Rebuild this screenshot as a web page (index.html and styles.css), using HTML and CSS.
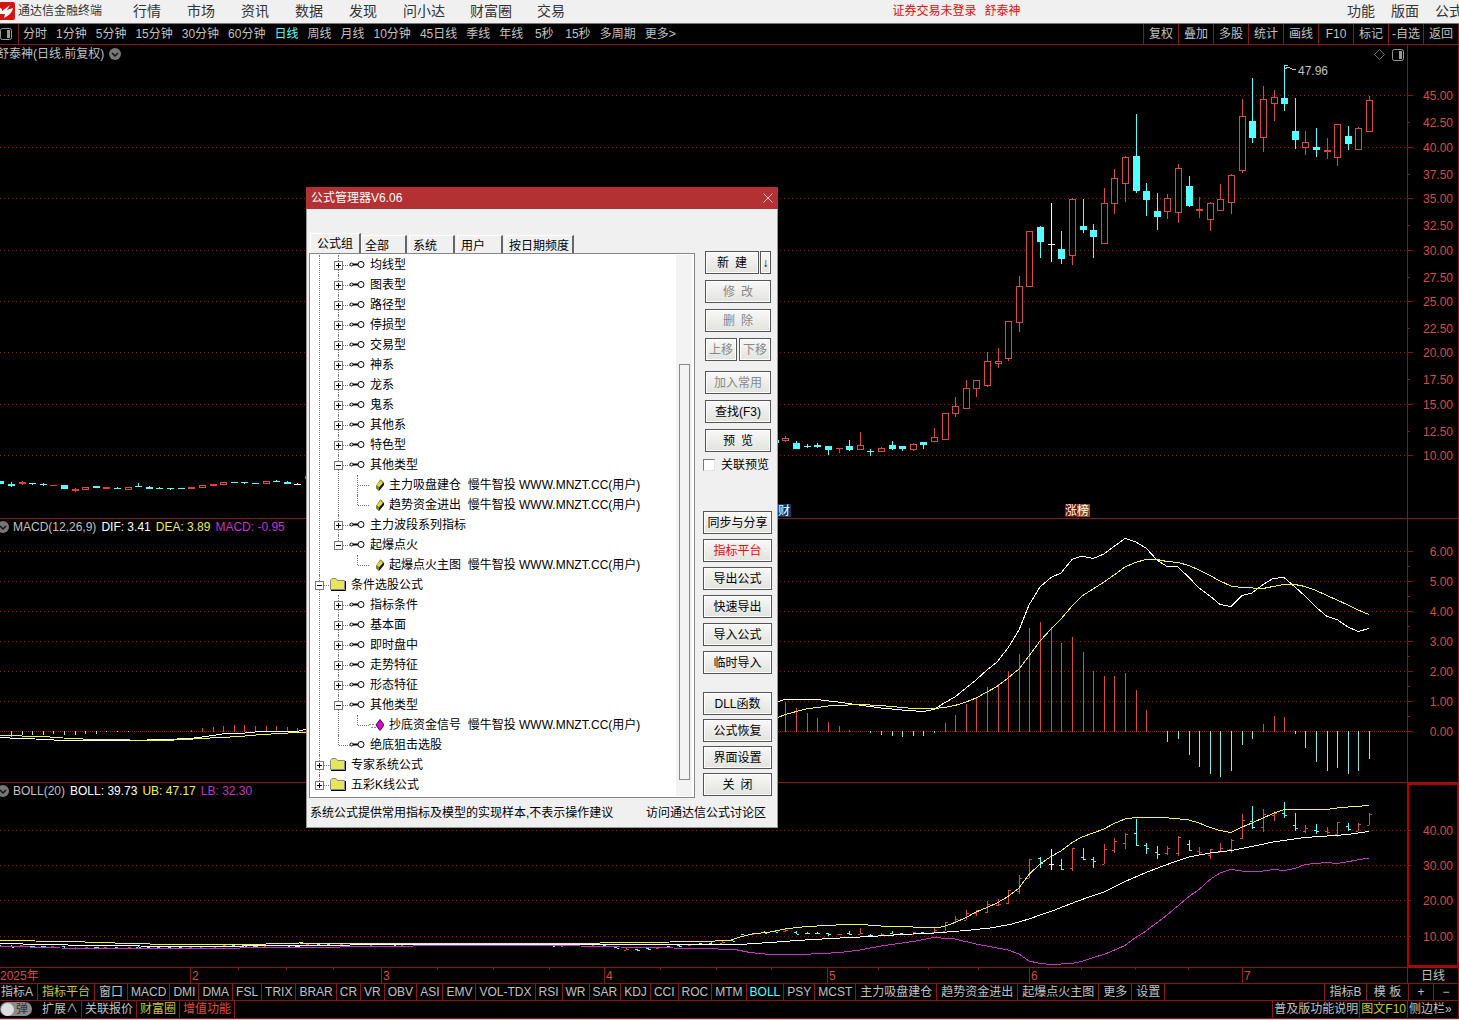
FILE: index.html
```html
<!DOCTYPE html>
<html lang="zh-CN">
<head>
    <meta charset="UTF-8">
    <title>通达信金融终端</title>
    <link rel="stylesheet" href="styles.css">
</head>
<body>

<div class="terminal">

    <header class="menubar">
        <svg class="logo" viewBox="0 0 16 18" width="16" height="18">
            <rect width="16" height="18" rx="2" fill="#d9120f"/>
            <path d="M0 6 L1 6 Q3 6 3 9 L11 3 L8 8 L14 6 Q13 12 5 16 L6 12 L0 12 Z" fill="#fff"/>
        </svg>
        <span class="app_name">通达信金融终端</span>
        <nav class="menu">
            <a href="#">行情</a><a href="#">市场</a><a href="#">资讯</a><a href="#">数据</a><a href="#">发现</a><a href="#">问小达</a><a href="#">财富圈</a><a href="#">交易</a>
        </nav>
        <div class="login_state"><span>证券交易未登录</span><span>舒泰神</span></div>
        <nav class="menu_right">
            <a href="#">功能</a><a href="#">版面</a><a href="#">公式</a>
        </nav>
    </header>

    <div class="periods">
        <svg class="side_icon" viewBox="0 0 12 12" width="12" height="12"><rect x="0.5" y="0.5" width="11" height="11" rx="2" fill="none" stroke="#999"/><rect x="7" y="2" width="3" height="8" fill="#999"/></svg>
        <nav class="period_list">
            <a href="#">分时</a><a href="#">1分钟</a><a href="#">5分钟</a><a href="#">15分钟</a><a href="#">30分钟</a><a href="#">60分钟</a><a href="#" class="on">日线</a><a href="#">周线</a><a href="#">月线</a><a href="#">10分钟</a><a href="#">45日线</a><a href="#">季线</a><a href="#">年线</a><a href="#">5秒</a><a href="#">15秒</a><a href="#">多周期</a><a href="#">更多&gt;</a>
        </nav>
        <div class="tools">
            <button>复权</button><button>叠加</button><button>多股</button><button>统计</button><button>画线</button><button>F10</button><button>标记</button><button>-自选</button><button>返回</button>
        </div>
    </div>

    <main class="charts">
        <section class="panel">
            <svg id="price" viewBox="0 45 1407 473"></svg>
            <svg id="price_axis" viewBox="1407 45 52 473"></svg>
            <div class="panel_head stock_head">
                <span>舒泰神(日线.前复权)</span>
                <svg class="fold" viewBox="0 0 12 12" width="12" height="12"><circle cx="6" cy="6" r="6" fill="#777"/><path d="M3 5 L6 8 L9 5" fill="none" stroke="#111" stroke-width="1.5"/></svg>
            </div>
            <div class="corner">
                <svg viewBox="0 0 11 11" width="11" height="11"><path d="M5.5 0.5 L10.5 5.5 L5.5 10.5 L0.5 5.5 Z" fill="none" stroke="#777"/></svg>
                <svg viewBox="0 0 12 12" width="12" height="12"><rect x="0.5" y="0.5" width="11" height="11" rx="2" fill="none" stroke="#999"/><rect x="7" y="2" width="3" height="8" fill="#999"/></svg>
            </div>
        </section>

        <section class="panel">
            <svg id="macd" viewBox="0 519 1407 263"></svg>
            <svg id="macd_axis" viewBox="1407 519 52 263"></svg>
            <div class="panel_head">
                <svg class="fold" viewBox="0 0 12 12" width="12" height="12"><circle cx="6" cy="6" r="6" fill="#777"/><path d="M3 5 L6 8 L9 5" fill="none" stroke="#111" stroke-width="1.5"/></svg>
                <span>MACD(12,26,9)</span><span class="white">DIF: 3.41</span><span class="yellow">DEA: 3.89</span><span class="magenta">MACD: -0.95</span>
            </div>
        </section>

        <section class="panel">
            <svg id="boll" viewBox="0 783 1407 184"></svg>
            <svg id="boll_axis" viewBox="1407 783 52 184"></svg>
            <div class="panel_head">
                <svg class="fold" viewBox="0 0 12 12" width="12" height="12"><circle cx="6" cy="6" r="6" fill="#777"/><path d="M3 5 L6 8 L9 5" fill="none" stroke="#111" stroke-width="1.5"/></svg>
                <span>BOLL(20)</span><span class="white">BOLL: 39.73</span><span class="yellow">UB: 47.17</span><span class="magenta">LB: 32.30</span>
            </div>
        </section>

        <section class="panel timeline">
            <svg id="timeline" viewBox="0 968 1407 15"></svg>
            <div class="cycle">日线</div>
        </section>
    </main>

    <div class="tabbar">
        <button class="cn">指标A</button><button class="cn yellow">指标平台</button><button class="cn">窗口</button><button>MACD</button><button>DMI</button><button>DMA</button><button>FSL</button><button>TRIX</button><button>BRAR</button><button>CR</button><button>VR</button><button>OBV</button><button>ASI</button><button>EMV</button><button>VOL-TDX</button><button>RSI</button><button>WR</button><button>SAR</button><button>KDJ</button><button>CCI</button><button>ROC</button><button>MTM</button><button class="on">BOLL</button><button>PSY</button><button>MCST</button><button class="cn">主力吸盘建仓</button><button class="cn">趋势资金进出</button><button class="cn">起爆点火主图</button><button class="cn">更多</button><button class="cn">设置</button>
        <div class="tab_right">
            <button class="tpl">指标B</button><button class="tpl">模 板</button><button class="zoom">+</button><button class="zoom">−</button>
        </div>
    </div>

    <footer class="statusbar">
        <label class="switch"><input type="checkbox"><span class="knob"></span><span class="switch_text">弹</span></label>
        <button>扩展∧</button><button>关联报价</button><button class="yellow">财富圈</button><button class="red">增值功能</button>
        <div class="status_right">
            <a href="#">普及版功能说明</a><a href="#" class="yellow">图文F10</a><a href="#">侧边栏»</a>
        </div>
    </footer>

    <!-- 公式管理器 -->
    <div class="dialog" role="dialog" aria-label="公式管理器">
        <div class="dialog_title">
            <span>公式管理器V6.06</span>
            <button class="close" aria-label="关闭"><svg viewBox="0 0 10 10" width="10" height="10"><path d="M0.5 0.5 L9.5 9.5 M9.5 0.5 L0.5 9.5" stroke="#f3c9c9" fill="none"/></svg></button>
        </div>
        <div class="dialog_body">
            <div class="left">
                <div class="tabs">
                    <button class="sel">公式组</button><button>全部</button><button>系统</button><button>用户</button><button>按日期频度</button>
                </div>
                <div class="tree_box">
                    <ul class="tree" id="tree"></ul>
                    <div class="track"><div class="thumb"></div></div>
                </div>
            </div>
            <div class="side">
                <div class="group narrow">
                    <div class="pair"><button class="grow">新&ensp;建</button><button class="arrow">↓</button></div>
                    <button disabled>修&ensp;改</button>
                    <button disabled>删&ensp;除</button>
                    <div class="pair even"><button disabled>上移</button><button disabled>下移</button></div>
                </div>
                <div class="group narrow">
                    <button class="dim">加入常用</button>
                    <button>查找(F3)</button>
                    <button>预&ensp;览</button>
                </div>
                <label class="link_preview"><input type="checkbox">关联预览</label>
                <div class="group io">
                    <button>同步与分享</button>
                    <button class="hot">指标平台</button>
                    <button>导出公式</button>
                    <button>快速导出</button>
                    <button>导入公式</button>
                    <button>临时导入</button>
                </div>
                <div class="group last">
                    <button>DLL函数</button>
                    <button>公式恢复</button>
                    <button>界面设置</button>
                    <button>关&ensp;闭</button>
                </div>
            </div>
        </div>
        <div class="dialog_foot">
            <span>系统公式提供常用指标及模型的实现样本,不表示操作建议</span>
            <a href="#">访问通达信公式讨论区</a>
        </div>
    </div>

</div>

<script src="charts.js"></script>
</body>
</html>
```
FILE: styles.css
```css
*{
    margin: 0;
    padding: 0;
    box-sizing: border-box;
}
body{
    background: #000;
    color: #c0c0c0;
    font: 12px/16px "Liberation Sans", "Noto Sans CJK SC", sans-serif;
    overflow-x: hidden;
}
a{
    color: inherit;
    text-decoration: none;
}
button{
    font: inherit;
    color: inherit;
    background: none;
    border: none;
    white-space: nowrap;
}
svg{
    display: block;
}
.terminal{
    position: relative;
    border-bottom: 1px solid #d8c8c8;
    overflow: hidden;
}
.yellow{ color: #c8c832; }
.white{ color: #fff; }
.magenta{ color: #c832c8; }
.red{ color: #e04a40; }

/* 顶部菜单 */
.menubar{
    display: flex;
    align-items: center;
    height: 24px;
    padding-bottom: 2px;
    background: #f0f0f0;
    border-bottom: 1px solid #777;
    color: #333;
    white-space: nowrap;
}
.logo{
    margin-left: -1px;
}
.app_name{
    width: 118px;
    padding-left: 3px;
}
.menu{
    display: flex;
    gap: 25px;
    font-size: 14px;
}
.menu a{
    min-width: 29px;
}
.login_state{
    display: flex;
    gap: 8px;
    margin: 0 auto;
    color: #e01010;
}
.menu_right{
    display: flex;
    gap: 16px;
    margin-right: -4px;
    font-size: 14px;
}

/* 周期栏 */
.periods{
    display: flex;
    align-items: center;
    height: 21px;
    border-bottom: 1px solid #8c1616;
    white-space: nowrap;
}
.side_icon{
    flex: none;
}
.period_list{
    display: flex;
    gap: 9px;
    margin-left: 6px;
    padding-left: 4px;
    border-left: 1px solid #8c1616;
    line-height: 20px;
}
.period_list a{
    min-width: 24px;
    text-align: center;
}
.on{
    color: #54ffff;
}
.tools{
    display: flex;
    margin-left: auto;
    border-right: 1px solid #8c1616;
}
.tools button{
    width: 35px;
    height: 20px;
    border-left: 1px solid #8c1616;
}

/* 图表 */
.panel{
    position: relative;
    display: grid;
    grid-template-columns: 1fr 52px;
    border-bottom: 1px solid #8c1616;
}
.panel > svg{
    width: 100%;
    overflow: hidden;
    shape-rendering: crispEdges;
}
.panel text{
    font: 12px "Liberation Sans", "Noto Sans CJK SC", sans-serif;
}
.panel_head{
    position: absolute;
    top: 0;
    left: 0;
    display: flex;
    align-items: center;
    gap: 5px;
    margin-left: -3px;
}
.panel_head .fold + span{
    margin-left: -1px;
}
.panel_head .yellow{ color: #f0f04a; }
.stock_head{
    top: 1px;
}
.corner{
    position: absolute;
    top: 4px;
    right: 55px;
    display: flex;
    gap: 7px;
}
.timeline{
    height: 16px;
}
.cycle{
    border: solid #8c1616;
    border-width: 0 1px;
    text-align: center;
}

/* 指标标签 */
.tabbar, .statusbar{
    display: flex;
    height: 17px;
    border-bottom: 1px solid #8c1616;
}
.tabbar button{
    padding: 0 3px;
    line-height: 16px;
    border-right: 1px solid #8c1616;
}
.tabbar .cn{
    padding: 0 4px;
}
.tabbar .cn:first-child{
    padding-left: 1px;
}
.tab_right, .status_right{
    display: flex;
    margin-left: auto;
    border-left: 1px solid #8c1616;
}
.tabbar .tpl{
    width: 42px;
    padding: 0;
}
.tabbar .zoom{
    width: 25px;
}
.statusbar{
    height: 18px;
}
.statusbar button, .status_right a{
    padding: 0 3px;
    line-height: 17px;
    border-right: 1px solid #8c1616;
}
.status_right a{
    padding: 0 1px;
}
.status_right a:last-child{
    width: 51px;
}
.switch{
    position: relative;
    display: flex;
    align-items: center;
    justify-content: flex-end;
    width: 32px;
    height: 14px;
    margin: 1px 7px 0 0;
    padding-right: 4px;
    border-radius: 7px;
    background: #8c8c8c;
    color: #333;
}
.switch input{
    position: absolute;
    opacity: 0;
}
.knob{
    position: absolute;
    left: 1px;
    width: 13px;
    height: 13px;
    border-radius: 50%;
    background: #ddd;
}

/* 公式管理器 */
.dialog{
    position: absolute;
    left: 306px;
    top: 187px;
    width: 472px;
    background: #f0f0f0;
    border: 1px solid #999;
    border-top: none;
    color: #000;
}
.dialog_title{
    display: flex;
    align-items: center;
    justify-content: space-between;
    height: 22px;
    margin: 0 -1px;
    padding: 0 5px;
    background: #b43032;
    color: #fff;
}
.close{
    width: 10px;
    height: 12px;
}
.dialog_body{
    display: flex;
    justify-content: space-between;
    padding: 24px 5px 0 2px;
}
.left{
    width: 386px;
}
.tabs{
    display: flex;
    align-items: flex-end;
    gap: 2px;
    height: 20px;
    padding-left: 1px;
}
.tabs button{
    min-width: 46px;
    height: 18px;
    padding: 2px 3px 0;
    text-align: left;
    border: solid #666;
    border-width: 0 2px 0 0;
    border-top: 1px solid #fff;
    border-left: 1px solid #fff;
}
.tabs .sel{
    height: 20px;
    padding: 0 6px;
    margin-right: -2px;
}
.tree_box{
    display: flex;
    justify-content: space-between;
    height: 545px;
    padding: 1px 2px 1px 0;
    background: #fff;
    border: 1px solid #888;
}
.track{
    width: 16px;
    background: #f3f3f3;
    padding: 109px 2px 0 3px;
}
.thumb{
    height: 416px;
    border: 1px solid #888;
    background: #f3f3f3;
}
.tree, .tree ul{
    list-style: none;
}
.tree{
    overflow: hidden;
    flex: 1;
}
.tree li{
    position: relative;
    padding-left: 19px;
}
/* 竖向虚线 */
.tree li::before{
    content: "";
    position: absolute;
    left: 9px;
    top: 0;
    bottom: 0;
    border-left: 1px dotted #777;
}
.tree li:last-child::before{
    bottom: auto;
    height: 10px;
}
.row{
    display: flex;
    align-items: center;
    gap: 5px;
    height: 20px;
    padding-left: 1px;
    white-space: pre;
}
/* 横向虚线 */
.row::before{
    content: "";
    position: absolute;
    left: 10px;
    top: 10px;
    width: 11px;
    border-top: 1px dotted #777;
}
.row svg{
    flex: none;
}
.toggle{
    position: absolute;
    left: 5px;
    top: 6px;
    width: 9px;
    height: 9px;
    border: 1px solid #777;
    background: #fff;
}
.toggle::before, .toggle.plus::after{
    content: "";
    position: absolute;
    left: 1px;
    top: 3px;
    width: 5px;
    height: 1px;
    background: #000;
}
.toggle.plus::after{
    left: 3px;
    top: 1px;
    width: 1px;
    height: 5px;
}

/* 右侧按钮 */
.side{
    width: 69px;
    padding-top: 18px;
}
.group{
    display: flex;
    flex-direction: column;
    gap: 6px;
}
.narrow{
    padding: 0 1px 0 2px;
    margin-bottom: 10px;
}
.group button{
    height: 23px;
    border: 1px solid #555;
    background: linear-gradient(#f8f8f8, #e2e2de);
    box-shadow: inset 0 0 0 1px #fff;
}
.group button:disabled, .group .dim{
    color: #888;
}
.group .hot{
    color: #f00;
}
.pair{
    display: flex;
    gap: 1px;
}
.pair .grow, .even button{
    flex: 1;
}
.pair .arrow{
    display: flex;
    align-items: center;
    justify-content: center;
    width: 11px;
}
.even{
    gap: 2px;
}
.link_preview{
    display: flex;
    align-items: center;
    gap: 6px;
    height: 16px;
    margin-top: -5px;
    white-space: nowrap;
}
.link_preview input{
    appearance: none;
    width: 12px;
    height: 12px;
    background: #fff;
    border: 1px solid #e3e3e3;
    border-top-color: #777;
    border-left-color: #777;
}
.io{
    gap: 5px;
    margin-top: 38px;
}
.last{
    gap: 4px;
    margin-top: 18px;
}
.dialog_foot{
    display: flex;
    justify-content: space-between;
    padding: 7px 11px 6px 3px;
}
```
FILE: charts.js
```js
var RED = "#d84a45", CYAN = "#54ffff", GRID = "#8c1616", LINE = "#8c1616";
var NS = "http://www.w3.org/2000/svg";

function el (id, name, attrs, text) {
    var node = document.createElementNS(NS, name);
    for (var key in attrs) {
        node.setAttribute(key, attrs[key]);
    }
    if (text) node.textContent = text;
    document.getElementById(id).appendChild(node);
}
function rect (id, x, y, w, h, color) {
    el(id, "rect", {x: x, y: y, width: w, height: Math.max(h, 1), fill: color});
}
function grid (id, y, dash) {
    el(id, "line", {x1: 0, x2: 1407, y1: y + 0.5, y2: y + 0.5, stroke: GRID, "stroke-dasharray": dash});
}
function curve (id, points, color) {
    el(id, "polyline", {points: points, fill: "none", stroke: color, "stroke-width": 1});
}
function label (id, x, y, text, color) {
    el(id, "text", {x: x, y: y, fill: color}, text);
}
function scale (id, y, text, tick) {
    rect(id, 1408, y, tick, 1, LINE);
    el(id, "text", {x: 1453, y: y + 5, fill: RED, "text-anchor": "end"}, text);
}
// k = 0 is the newest bar
function barX (k) {
    return Math.round(1369 - 10.61 * k);
}

// kind, high, body top, body bottom, low
var bars = [
    ["u",96,100,132,132],["u",127,128,150,150],["d",126,136,144,150],["u",124,124,158,166],["r",138,150,152,159],
    ["d",128,147,150,157],["u",131,142,148,155],["d",98,131,140,149],["d",65,98,104,111],["u",90,97,104,121],
    ["u",86,99,138,152],["d",78,121,138,143],["u",99,116,171,173],["u",174,175,203,214],["u",184,199,211,211],
    ["u",202,203,220,231],["r",197,209,211,218],["d",176,186,206,207],["u",164,168,213,223],["u",194,198,212,219],
    ["d",193,211,217,230],["d",183,191,200,216],["d",114,156,191,193],["u",156,157,184,202],["u",169,178,204,214],
    ["u",188,203,244,244],["d",224,230,237,258],["d",199,226,230,233],["u",198,199,256,265],["d",231,249,259,264],
    ["w",203,244,245,262],["d",226,227,242,258],["u",231,231,287,287],["u",276,286,323,332],["u",321,321,359,361],
    ["u",348,361,364,368],["u",352,361,386,387],["u",380,380,389,397],["u",380,388,409,409],["u",397,406,414,417],
    ["u",413,413,440,440],["u",428,437,442,442],["d",442,442,445,449],["u",443,444,450,451],["d",446,446,449,451],
    ["d",441,445,449,450],["u",447,448,452,452],["d",449,451,452,456],["u",432,445,450,450],["d",440,446,450,451],
    ["r",448,448,449,453],["d",446,446,450,455],["d",443,445,447,448],["d",444,446,447,448],["d",441,443,449,449],
    ["u",436,438,441,442]
];
// quiet stretch before the rally
var flat = [440,442,446,449,466,472,474,476,479,482,485,488,491,494,492,486,480,478,476,479,481,480,478,476,477,478,476,475,476,478,479,477,476,475,476,477,478,476,477,476,475,477,478,477,476];
for (var i = 0; i < flat.length; i++) {
    bars.push([i % 3 == 2 ? "u" : "d", flat[i] - 1, flat[i], flat[i] + 3, flat[i] + 4]);
}
bars.push(["w",483,484,485,485],["d",481,482,484,484],["d",480,481,482,482],["u",481,481,484,484],["d",483,483,484,484],
    ["d",482,482,483,484],["d",482,482,483,483],["u",482,482,485,485],["r",484,484,486,486],["u",485,485,488,488],
    ["r",487,487,489,489],["d",488,488,489,489],["d",488,488,489,490],["d",487,488,489,489],["d",486,487,489,489],
    ["d",483,486,487,487],["u",487,487,490,490],["d",487,488,489,489],["r",487,487,489,489],["d",486,486,488,488],
    ["u",487,487,490,490],["r",488,489,491,492],["d",485,485,489,489],["r",485,485,486,486],["d",483,484,485,486],
    ["d",483,483,484,485],["r",481,482,484,485],["d",482,484,486,487],["d",481,481,484,484]);

var colors = {u: RED, r: "#e83a36", d: CYAN, w: "#fff"};

// axis frames, the last one is the active panel
rect("price_axis", 1407, 45, 1, 473, LINE);
rect("price_axis", 1458, 45, 1, 473, LINE);
rect("macd_axis", 1407, 519, 1, 263, LINE);
rect("macd_axis", 1458, 519, 1, 263, LINE);
el("boll_axis", "rect", {x: 1408, y: 784, width: 50, height: 182, fill: "none", stroke: "#b40000", "stroke-width": 2});

// price panel
[95, 147, 198, 250, 301, 352, 404, 455].forEach(function (y, n) {
    grid("price", y, "1 3");
    scale("price_axis", y, (45 - n * 5).toFixed(2), 5);
});
[122, 174, 225, 277, 328, 379, 431].forEach(function (y, n) {
    scale("price_axis", y, (42.5 - n * 5).toFixed(2), 2);
});
bars.forEach(function (b, k) {
    var x = barX(k), c = colors[b[0]];
    if (b[0] == "u") {
        if (b[2] > b[1]) rect("price", x, b[1], 1, b[2] - b[1], c);
        if (b[4] > b[3]) rect("price", x, b[3], 1, b[4] - b[3], c);
        el("price", "rect", {x: x - 2.5, y: b[2] + 0.5, width: 6, height: Math.max(b[3] - b[2] - 1, 1), fill: "#000", stroke: c});
    } else {
        rect("price", x, b[1], 1, b[4] - b[1], c);
        rect("price", x - 3, b[2], 7, b[3] - b[2], c);
    }
});
el("price", "path", {d: "M1284.5 65.5 h3 M1285 68.5 h2 M1286 67 l4 1 l2 1 l4 1", fill: "none", stroke: "#c0c0c0"});
label("price", 1298, 75, "47.96", "#c0c0c0");
rect("price", 778, 504, 13, 13, "#0c3c6e");
label("price", 778, 515, "财", "#fff");
rect("price", 1065, 504, 12, 13, "#780808");
rect("price", 1077, 504, 13, 13, "#8a4e10");
label("price", 1065, 515, "涨榜", "#fff");

// MACD panel
for (var n = 0; n < 7; n++) {
    grid("macd", 551 + n * 30, n == 6 ? "1 1" : "1 3");
    scale("macd_axis", 551 + n * 30, (6 - n).toFixed(2), 5);
    if (n < 6) rect("macd_axis", 1408, 566 + n * 30, 2, 1, LINE);
}
var hist = [759,771,774,768,771,762,748,734,717,716,724,739,745,771,777,774,767,755,739,742,731,710,690,673,676,676,671,652,637,643,627,622,628,654,671,684,687,697,704,715,723,733,736,736,737,736,735,733,731,730,726,722,718,713,708,702];
hist.forEach(function (y, k) {
    if (y < 731) rect("macd", barX(k), y, 1, 732 - y, RED);
    if (y > 731) rect("macd", barX(k), 731, 1, y - 731, "#86e8e8");
});
[728,727,726,726,726,725,725,726,727,728,730,731,731,731,731,731,732,732,732,734,734,735,735,734,735,735,735,737].forEach(function (y, n) {
    if (y < 731) rect("macd", barX(101 + n), y, 1, 732 - y, RED);
    if (y > 731) rect("macd", barX(101 + n), 731, 1, y - 731, "#86e8e8");
});
curve("macd", "0,737.5 10,738 48,739.5 60,740.5 130,740.5 165,739.5 190,738.5 206,736.5 222,734 232,733 245,733 260,731.5 297,731.5 303,730 310,728 778,702 785,699 812,699 838,702 859,705 881,708 902,710 923,711.5 934,709.5 944,703 955,697 966,688 976,680 987,670 997,662 1008,648 1019,630 1029,605 1040,587 1051,577.5 1061,573 1072,559.5 1082,556 1093,558.5 1104,554 1114,546.5 1125,538.5 1135,541.5 1146,548 1157,560 1167,566.5 1178,567 1189,577.5 1199,588 1210,596 1220,604.5 1231,606.5 1242,595.5 1252,593 1263,584.5 1273,578.5 1284,577.5 1295,587 1305,596 1316,607 1327,616.5 1337,619.5 1348,627 1358,631.5 1369,628.5", "#fff");
curve("macd", "0,735 12,735 27,736.5 50,737 70,738.5 95,739.5 130,740 163,740.5 185,739.5 210,738 240,736.5 262,734.5 306,732 778,717.5 785,714.5 806,709 828,706 859,704.5 881,705.5 913,708.5 934,708.5 944,707.5 955,705.5 966,702 976,698 987,692 997,686.5 1008,678 1019,669 1029,656 1040,641 1051,629 1061,619 1072,606 1082,596 1093,589 1104,582 1114,575 1125,567 1135,562.5 1146,559.5 1157,559.5 1167,561.5 1178,562.5 1189,565.5 1199,570 1210,575.5 1220,581 1231,586 1242,587.5 1263,588.5 1273,586.5 1284,584.5 1295,584.5 1305,586.5 1316,590.5 1327,595.5 1337,600 1348,605 1358,610 1369,614.5", "#f0f04a");

// BOLL panel, same bars on its own scale
[830, 865, 900, 936].forEach(function (y, n) {
    grid("boll", y, "1 3");
    scale("boll_axis", y, (40 - n * 10).toFixed(2), 3);
});
function bollY (y) {
    var price = 45 - (y - 95) * 35 / 360;
    return Math.round(936 - (price - 10) * 106 / 30);
}
bars.forEach(function (b, k) {
    var x = barX(k), c = colors[b[0]], up = b[0] == "u";
    var high = bollY(b[1]), low = bollY(b[4]);
    rect("boll", x, high, 1, low - high, c);
    rect("boll", x - 2, bollY(up ? b[3] : b[2]), 2, 1, c);
    rect("boll", x + 1, bollY(up ? b[2] : b[3]), 2, 1, c);
});
curve("boll", "0,940.5 70,941.5 130,943.5 190,945 250,944.5 300,943 400,943.5 500,943.5 600,943 640,942.5 700,941.5 730,940.5 740,937 752,934 770,932 785,929 806,926.5 828,925.5 845,924.5 862,924.5 881,926 913,927 934,928 944,926.5 955,922.5 966,917.5 976,912 987,907.5 997,903 1008,896.5 1019,888 1029,874.5 1040,864 1051,856.5 1061,851 1072,842.5 1082,837 1104,829 1114,823.5 1125,819 1135,817.5 1163,817.5 1180,819 1189,820 1199,823 1210,827.5 1220,830.5 1231,832.5 1242,827 1252,823 1263,818 1273,813.5 1284,809.5 1295,809.5 1327,809.5 1337,808 1348,807 1369,805.5", "#f0f04a");
curve("boll", "0,943.5 90,945.5 190,946.5 300,945.5 400,944.5 500,944.5 600,944.5 700,945 740,944.5 770,942.5 797,940.5 830,938.5 870,936.5 902,934.5 934,933 966,930.5 990,928 1010,924.5 1029,919 1040,915 1051,911.5 1061,907.5 1082,899.5 1104,892 1125,881.5 1146,872.5 1167,864.5 1189,857 1210,853 1231,850.5 1252,846.5 1273,842 1284,840.5 1305,837.5 1327,836 1348,834.5 1369,831.5", "#fff");
curve("boll", "0,946 60,948 140,948.5 240,948 340,947 450,945.5 560,945.5 620,947 700,948.5 735,949.5 750,952.5 770,954.5 800,954.5 822,953.5 840,952.5 860,950 881,946 913,941.5 934,937.5 955,939 976,944 1008,950 1019,954 1029,961 1040,963.5 1051,964.5 1072,963.5 1082,961.5 1093,957.5 1104,954.5 1125,945.5 1135,938 1146,931 1167,915 1189,896.5 1199,889.5 1210,879.5 1220,873 1231,869.5 1242,871 1263,871 1273,869.5 1284,870.5 1295,868.5 1305,864.5 1327,862.5 1337,863.5 1369,858", "#c832c8");

// months
label("timeline", 0, 980, "2025年", RED);
[190, 381, 604, 827, 1029, 1242].forEach(function (x, n) {
    rect("timeline", x, 968, 1, 15, LINE);
    label("timeline", x + 2, 980, String(n + 2), RED);
});
[238, 286, 333, 437, 493, 549, 660, 716, 771, 878, 928, 978, 1081, 1135, 1188].forEach(function (x) {
    rect("timeline", x, 968, 1, 2, LINE);
});

// formula tree
var icons = {
    key: '<svg viewBox="0 0 16 10" width="16" height="10"><circle cx="2.5" cy="4.5" r="1.5" fill="none" stroke="#000"/><path d="M4 4.5 H9" stroke="#000" stroke-width="2"/><circle cx="12" cy="4.5" r="3" fill="#fff" stroke="#000"/></svg>',
    folder: '<svg viewBox="0 0 16 14" width="16" height="14"><path d="M0.5 11.5 V2.5 L2 0.5 H6 L7.5 2.5 H14.5 V11.5 Z" fill="#e6e65a" stroke="#888"/><path d="M1 12.5 H15.5 V3" fill="none" stroke="#000"/></svg>',
    leaf: '<svg viewBox="0 0 16 12" width="16" height="12"><path d="M8 7 L12.5 0.5 L16 4 V6 L11 12 L8 9 Z" fill="#111"/><path d="M8.5 6.5 L12.5 1 L15 4 L11 8.5 Z" fill="#e0dc30"/><path d="M8 6.5 L11 8.5 V11.5 L8 8.5 Z" fill="#8c8820"/></svg>',
    gem: '<svg viewBox="0 0 16 12" width="16" height="12"><path d="M1 5.5 H7 M3 8.5 H8" stroke="#888" stroke-dasharray="2 1"/><path d="M12 0.5 L16 6 L12 11.5 L8 6 Z" fill="#e000e0" stroke="#400040"/></svg>'
};
var AUTHOR = "  慢牛智投 WWW.MNZT.CC(用户)";
function leaf (name, icon) {
    return {name: name + AUTHOR, icon: icon || "leaf"};
}
function closed (name) {
    return {name: name, icon: "key", toggle: "plus"};
}
var tree = [
    {children: ["均线型", "图表型", "路径型", "停损型", "交易型", "神系", "龙系", "鬼系", "其他系", "特色型"].map(closed).concat([
        {name: "其他类型", icon: "key", toggle: "minus", children: [leaf("主力吸盘建仓"), leaf("趋势资金进出")]},
        closed("主力波段系列指标"),
        {name: "起爆点火", icon: "key", toggle: "minus", children: [leaf("起爆点火主图")]}
    ])},
    {name: "条件选股公式", icon: "folder", toggle: "minus", children: ["指标条件", "基本面", "即时盘中", "走势特征", "形态特征"].map(closed).concat([
        {name: "其他类型", icon: "key", toggle: "minus", children: [leaf("抄底资金信号", "gem")]},
        {name: "绝底狙击选股", icon: "key"}
    ])},
    {name: "专家系统公式", icon: "folder", toggle: "plus"},
    {name: "五彩K线公式", icon: "folder", toggle: "plus"}
];
function build (nodes) {
    return nodes.map(function (node) {
        var html = "<li>";
        if (node.name) {
            html += '<div class="row">' + icons[node.icon] + "<span>" + node.name + "</span></div>";
        }
        if (node.toggle) {
            html += '<button class="toggle ' + node.toggle + '" aria-label="展开"></button>';
        }
        if (node.children) {
            html += "<ul>" + build(node.children) + "</ul>";
        }
        return html + "</li>";
    }).join("");
}
document.getElementById("tree").innerHTML = build(tree);
```
